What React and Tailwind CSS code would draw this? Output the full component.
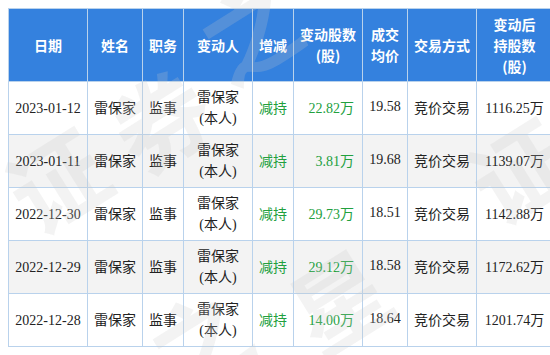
import React from 'react';

const rows = [
  { date: '2023-01-12', change: '22.82万', price: '19.58', after: '1116.25万' },
  { date: '2023-01-11', change: '3.81万', price: '19.68', after: '1139.07万' },
  { date: '2022-12-30', change: '29.73万', price: '18.51', after: '1142.88万' },
  { date: '2022-12-29', change: '29.12万', price: '18.58', after: '1172.62万' },
  { date: '2022-12-28', change: '14.00万', price: '18.64', after: '1201.74万' },
];

const th = 'border border-[#b9d2ec] bg-[#3481de] text-white font-bold text-center align-middle p-0';
const td = 'border border-[#b9d2ec] text-center align-middle p-0 h-[53px]';

const App = () => {
  return (
    <div
      className="relative w-[550px] h-[355px] overflow-hidden bg-white text-[#222] text-[14px] leading-[21px]"
      style={{ fontFamily: '"Liberation Serif", "Noto Sans CJK SC", serif' }}
    >
      <div className="pt-2 pl-2">
        <table className="border-collapse table-fixed w-[552px]">
          <colgroup>
            <col className="w-[79px]" />
            <col className="w-[55px]" />
            <col className="w-[41px]" />
            <col className="w-[69px]" />
            <col className="w-[41px]" />
            <col className="w-[69px]" />
            <col className="w-[45px]" />
            <col className="w-[69px]" />
            <col className="w-[84px]" />
          </colgroup>
          <thead style={{ fontFamily: '"Noto Sans CJK SC", sans-serif' }}>
            <tr className="h-[73px]">
              <th className={th}>日期</th>
              <th className={th}>姓名</th>
              <th className={th}>职务</th>
              <th className={th}>变动人</th>
              <th className={th}>增减</th>
              <th className={th}>变动股数<br />(股)</th>
              <th className={th}>成交<br />均价</th>
              <th className={th}>交易方式</th>
              <th className={`${th} pr-[8px]`}>变动后<br />持股数<br />(股)</th>
            </tr>
          </thead>
          <tbody>
            {rows.map((r, i) => (
              <tr key={r.date} className={i % 2 === 1 ? 'bg-[#f3f3f3]' : 'bg-white'}>
                <td className={td}>{r.date}</td>
                <td className={td}>雷保家</td>
                <td className={td}>监事</td>
                <td className={td}>雷保家<br />(本人)</td>
                <td className={`${td} text-[#22a03e]`}>减持</td>
                <td className={`${td} text-right pr-[8px] text-[#22a03e]`}>{r.change}</td>
                <td className={`${td} pb-[4px]`}>{r.price}</td>
                <td className={td}>竞价交易</td>
                <td className={`${td} pr-[8px]`}>{r.after}</td>
              </tr>
            ))}
          </tbody>
        </table>
      </div>

      {/* 水印 */}
      <div
        aria-hidden="true"
        className="pointer-events-none select-none absolute inset-0 text-[96px] leading-none font-bold text-[#c8c8c8]/[0.22]"
        style={{ fontFamily: '"Noto Sans CJK SC", sans-serif' }}
      >
        <span className="absolute left-[8px] top-[130px] -rotate-[32deg]">证</span>
        <span className="absolute left-[112px] top-[70px] -rotate-[32deg]">券</span>
        <span className="absolute left-[200px] top-[-20px] -rotate-[32deg]">之</span>
        <span className="absolute left-[150px] top-[290px] -rotate-[32deg]">之</span>
        <span className="absolute left-[290px] top-[250px] -rotate-[32deg]">星</span>
        <span className="absolute left-[470px] top-[120px] -rotate-[32deg]">证</span>
      </div>
    </div>
  );
};

export default App;
